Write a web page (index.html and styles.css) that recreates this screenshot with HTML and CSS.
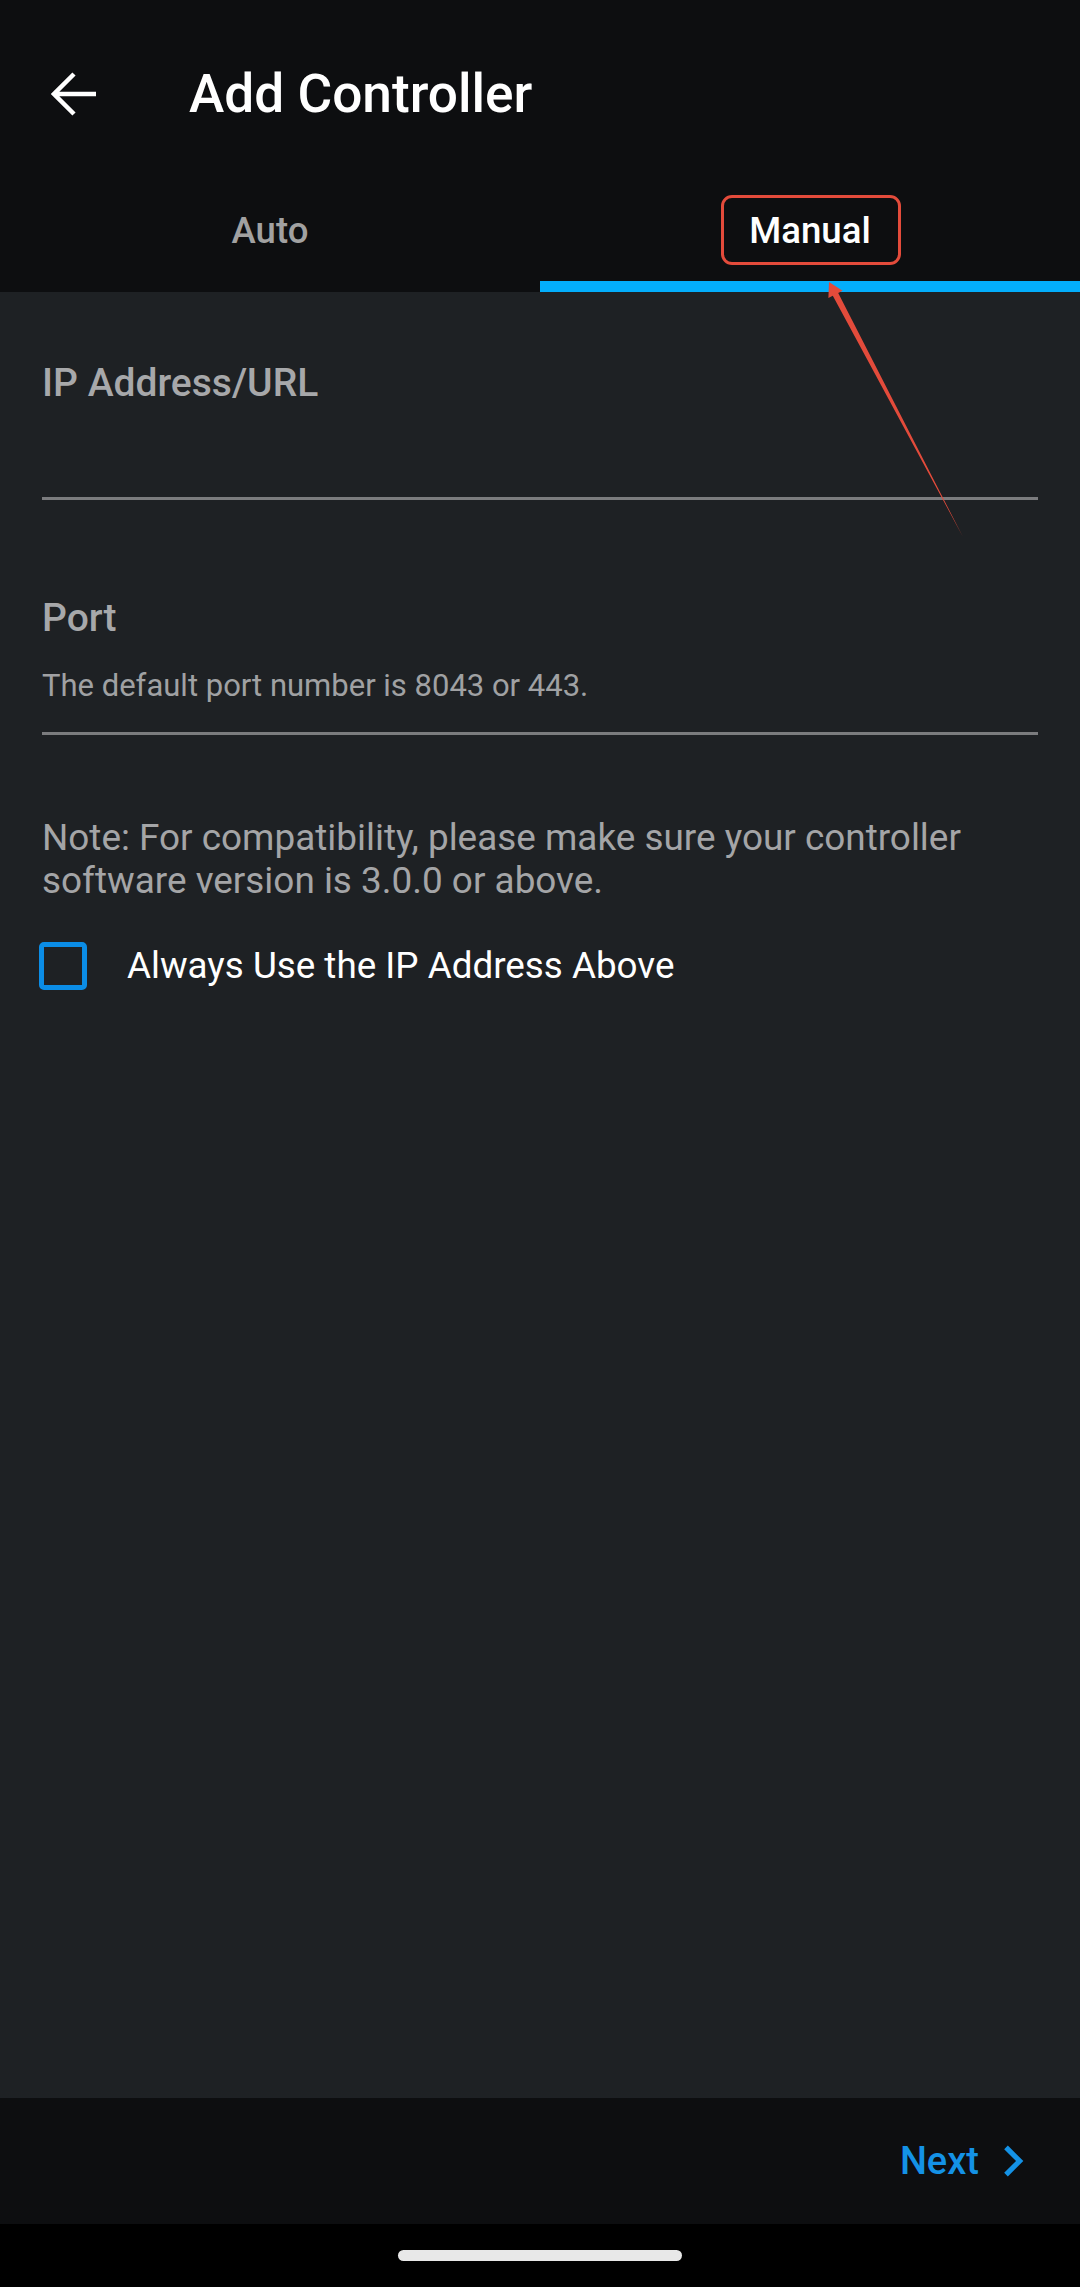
FILE: index.html
```html
<!DOCTYPE html>
<html lang="en">
<head>
<meta charset="utf-8">
<title>Add Controller</title>
<link rel="stylesheet" href="styles.css">
</head>
<body>
<div class="screen">
  <header class="appbar">
    <button class="back" aria-label="Back">
      <svg width="46" height="44" viewBox="0 0 46 44"><path d="M3 22H45M23 2L3 22L23 42" fill="none" stroke="#ffffff" stroke-width="4.5" stroke-linecap="butt" stroke-linejoin="miter"/></svg>
    </button>
    <h1 class="title">Add Controller</h1>
  </header>
  <nav class="tabs">
    <div class="tab">Auto</div>
    <div class="tab active">Manual</div>
  </nav>
  <main class="content">
    <div class="field">
      <div class="label">IP Address/URL</div>
      <div class="input"></div>
    </div>
    <div class="field port">
      <div class="label">Port</div>
      <div class="input"><span class="hint">The default port number is 8043 or 443.</span></div>
    </div>
    <p class="note">Note: For compatibility, please make sure your controller software version is 3.0.0 or above.</p>
    <div class="check">
      <span class="box"></span>
      <span class="check-label">Always Use the IP Address Above</span>
    </div>
  </main>
  <footer class="actions">
    <button class="next">Next<svg width="62" height="62" viewBox="0 0 24 24"><path d="M10 6L8.59 7.41 13.17 12l-4.58 4.59L10 18l6-6z" fill="#1492e6"/></svg></button>
  </footer>
  <div class="navbar"><span class="home"></span></div>

  <div class="annot-box"></div>
  <svg class="annot-arrow" width="1080" height="600" viewBox="0 0 1080 600">
    <polygon points="829,282 842.6,290.7 838.2,293 963,537 832.8,295.8 828.4,298.1" fill="#e34b3b"/>
  </svg>
</div>
</body>
</html>
```
FILE: styles.css
```css
* { box-sizing: border-box; }
html, body { margin: 0; padding: 0; background: #000; }
body { font-family: Roboto, "Noto Sans", "Liberation Sans", sans-serif; }

.screen {
  position: relative;
  width: 1080px;
  height: 2287px;
  display: flex;
  flex-direction: column;
  overflow: hidden;
  background: #1e2124;
}

.appbar {
  height: 175px;
  flex: none;
  background: #0d0e10;
  display: flex;
  align-items: center;
  padding: 12px 0 0 51px;
}
.back {
  background: none;
  border: 0;
  padding: 0;
  margin: 0;
  width: 46px;
  height: 44px;
  display: flex;
}
.title {
  margin: 0 0 0 92px;
  font-size: 53.2px;
  line-height: 66px;
  font-weight: 500;
  color: #ffffff;
  letter-spacing: 0;
}

.tabs {
  height: 117px;
  flex: none;
  background: #0d0e10;
  display: grid;
  grid-template-columns: 1fr 1fr;
}
.tab {
  display: flex;
  align-items: center;
  justify-content: center;
  padding-top: 5px;
  border-bottom: 11px solid transparent;
  font-size: 36.6px;
  font-weight: 500;
  color: #a1a1a1;
}
.tab.active {
  color: #ffffff;
  border-bottom-color: #03aefc;
}

.content {
  flex: 1;
  padding: 68px 42px 0;
  display: flex;
  flex-direction: column;
}
.field .label {
  font-size: 39px;
  line-height: 46px;
  font-weight: 500;
  color: #a7a8aa;
}
.field .input {
  height: 94px;
  border-bottom: 3px solid #7b7c7e;
  padding-top: 25px;
}
.field.port { margin-top: 95px; }
.hint {
  display: block;
  font-size: 31px;
  line-height: 40px;
  color: #a0a1a3;
}
.note {
  margin: 81px 0 0;
  font-size: 36.9px;
  line-height: 43px;
  color: #a4a5a7;
}
.check {
  margin-top: 40px;
  display: flex;
  align-items: center;
  height: 48px;
}
.box {
  width: 48px;
  height: 48px;
  margin-left: -3px;
  border: 5px solid #0b8de6;
  border-radius: 5px;
  flex: none;
}
.check-label {
  margin-left: 40px;
  font-size: 36.8px;
  line-height: 46px;
  color: #ffffff;
}

.actions {
  height: 126px;
  flex: none;
  background: #0d0e10;
  display: flex;
  justify-content: flex-end;
  align-items: center;
  padding-right: 36px;
}
.next {
  background: none;
  border: 0;
  padding: 0;
  display: flex;
  align-items: center;
  font-family: Roboto, "Noto Sans", sans-serif;
  font-size: 38px;
  font-weight: 500;
  color: #1492e6;
}
.next svg { margin-left: 3px; }

.navbar {
  height: 63px;
  flex: none;
  background: #000;
  display: flex;
  justify-content: center;
  align-items: center;
}
.home {
  width: 284px;
  height: 11px;
  border-radius: 6px;
  background: #e8e8e8;
}

.annot-box {
  position: absolute;
  left: 721px;
  top: 195px;
  width: 180px;
  height: 70px;
  border: 3px solid #e34b3b;
  border-radius: 11px;
  pointer-events: none;
}
.annot-arrow {
  position: absolute;
  left: 0;
  top: 0;
  pointer-events: none;
}
```
